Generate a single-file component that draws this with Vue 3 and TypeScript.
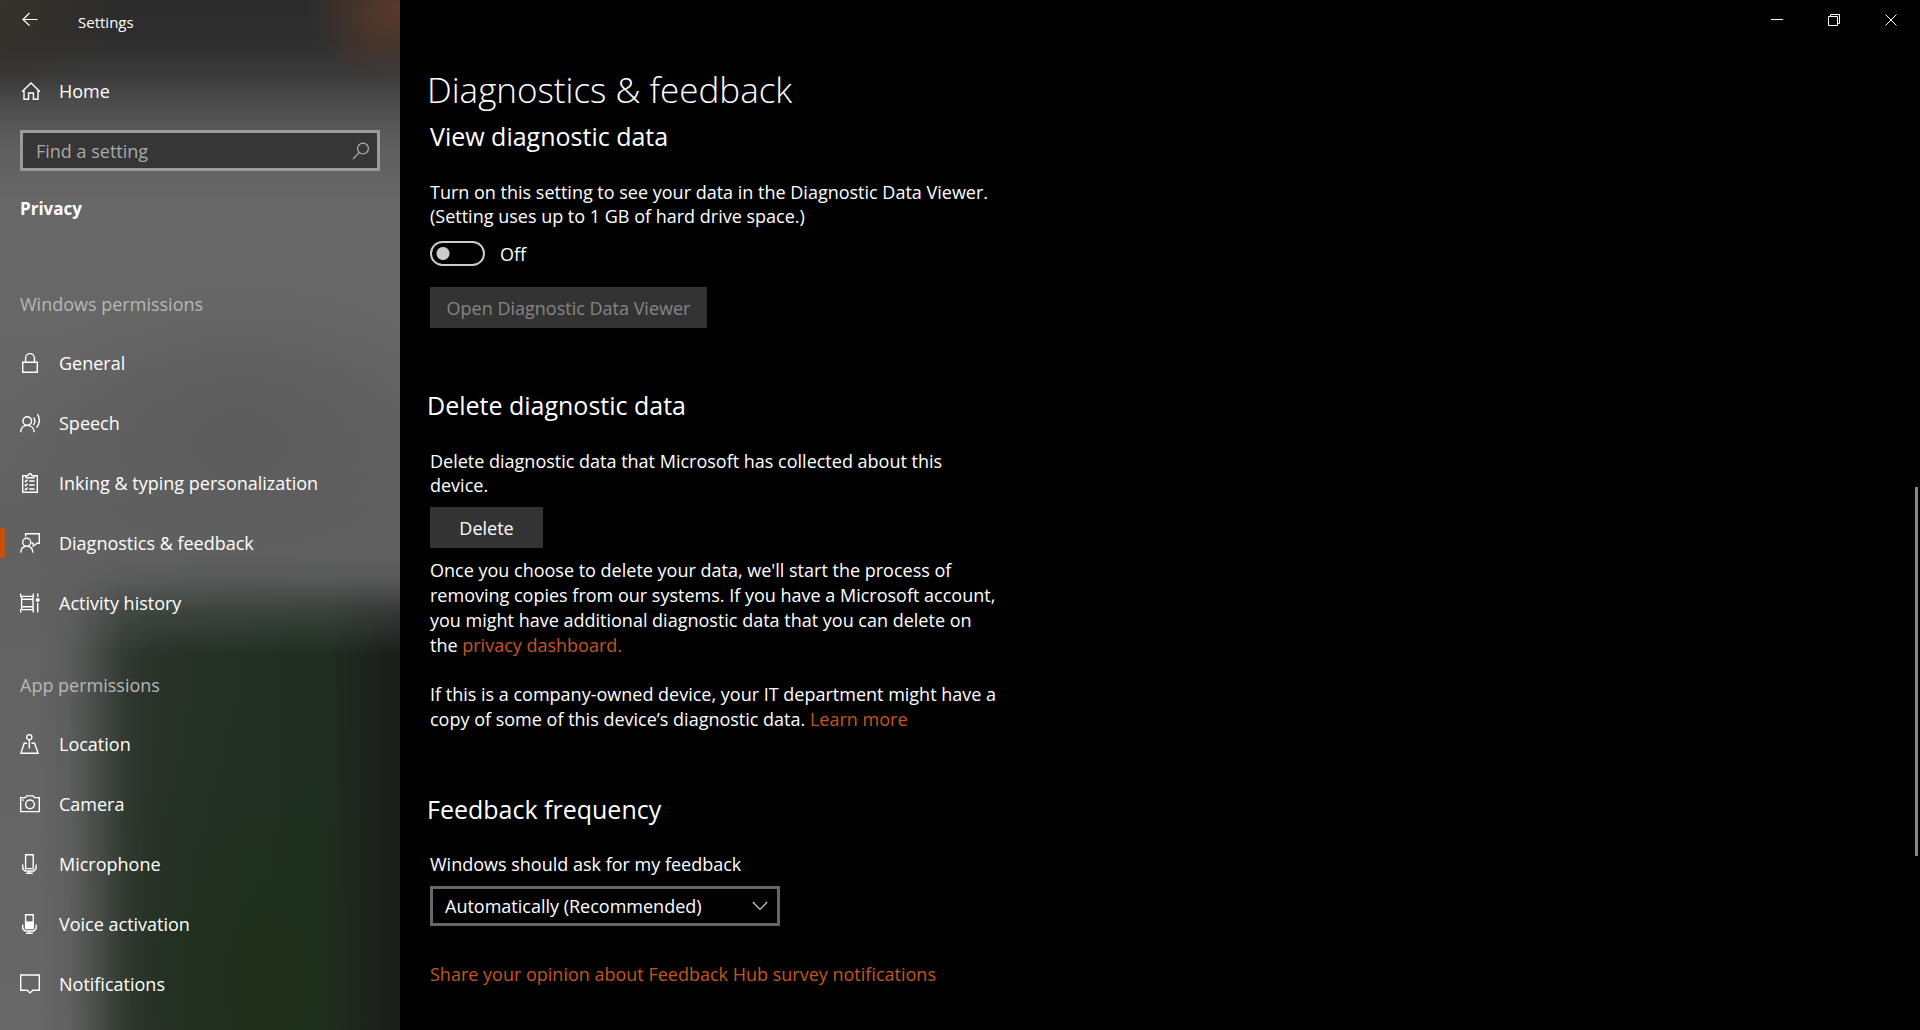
<script setup lang="ts">
import { ref } from 'vue'

interface NavItem {
  label: string
  icon: string
}
interface NavGroup {
  title: string
  items: NavItem[]
}

const groups: NavGroup[] = [
  {
    title: 'Windows permissions',
    items: [
      { label: 'General', icon: 'lock' },
      { label: 'Speech', icon: 'speech' },
      { label: 'Inking & typing personalization', icon: 'clipboard' },
      { label: 'Diagnostics & feedback', icon: 'feedback' },
      { label: 'Activity history', icon: 'history' },
    ],
  },
  {
    title: 'App permissions',
    items: [
      { label: 'Location', icon: 'location' },
      { label: 'Camera', icon: 'camera' },
      { label: 'Microphone', icon: 'mic' },
      { label: 'Voice activation', icon: 'voice' },
      { label: 'Notifications', icon: 'bell' },
    ],
  },
]

const paths: Record<string, string> = {
  lock: 'M2.7 9.2H17.3V19.3H2.7ZM5.6 9.2V5a4.4 4.4 0 0 1 8.8 0V9.2',
  speech:
    'M11.6 8a4.3 4.3 0 1 1-8.6 0a4.3 4.3 0 0 1 8.6 0M.7 19.3C.9 15 3.6 12.4 7.3 12.4S13.9 15 14.2 19.3M13.6 4.6c1.6 2.2 1.6 5.2-.2 7.4M17.4 1.2c2.6 4.4 2.6 9.2-.8 13.4',
  clipboard:
    'M6 2.7H2.7V19.3H17.3V2.7H14M6.2 4.8V2.6H8.2C8.4.2 11.6.2 11.8 2.6H13.8V4.8ZM9.2 8H14.6M9.2 12H14.6M9.2 16H14.6M4.8 7.8l1 1 1.8-2.2M4.8 11.8l1 1 1.8-2.2M4.8 15.8l1 1 1.8-2.2',
  feedback:
    'M10.7 9.2a4 4 0 1 1-8 0a4 4 0 0 1 8 0M.7 19.6C.9 15.8 3.2 13.2 6.7 13.2S12.7 15.8 13 19.6M5.6 3.4V.8H19.3V10.2H17.2L13.2 13.2V10.2H11.6',
  history:
    'M.7.6V3.4H13.3V.6M.7 19.4V16.6H13.3V19.4M1.6 6.2H13V13.8H1.6ZM1.6 3.4V16.6M13 3.4V16.6M17.7.6V4M17.7 10V19.4',
  location:
    'M11.9 3.2a2.6 2.6 0 1 1-5.2 0a2.6 2.6 0 0 1 5.2 0M9.3 5.8V14.6M7 9.2H4.2L.9 19.3H18.1L14.6 9.2H11.4',
  camera:
    'M.7 3.6H5.4L6.6 1.9H13.2L14.4 3.6H19.3V17.6H.7ZM14.4 10.4a4.4 4.4 0 1 1-8.8 0a4.4 4.4 0 0 1 8.8 0M2.4 6H4',
  mic: 'M5.6.8H13.2V14.6H5.6ZM2.7 10.6V14.6L5 17H13.8L16.1 14.6V10.6M9.4 17V19.3M6 19.3H12.8',
  voice: 'M5.6.8H13.2V14.6H5.6ZM2.7 10.6V14.6L5 17H13.8L16.1 14.6V10.6M9.4 17V19.3M6 19.3H12.8',
  bell: 'M.7 1H19.3V16.2H12.8L10 18.9L7.2 16.2H.7Z',
}

const active = ref('Diagnostics & feedback')
const query = ref('')
const viewerOn = ref(false)
const frequency = ref('auto')
</script>

<template>
  <div class="window">
    <aside class="sidebar">
      <header class="titlebar">
        <button class="back" type="button" aria-label="Back">
          <svg width="16" height="14" viewBox="0 0 16 14"><path d="M15.5 7.5H1M7.5 1L1 7.5l6.5 6" /></svg>
        </button>
        <span class="app-name">Settings</span>
      </header>

      <a class="nav-link home" href="#home">
        <svg width="20" height="20" viewBox="0 0 20 20">
          <path d="M2 10.8L11 2l9 8.8M4 9V18.3H8.6V12H13.4V18.3H18V9" />
        </svg>
        <span>Home</span>
      </a>

      <div class="search">
        <input v-model="query" type="text" placeholder="Find a setting" aria-label="Find a setting" />
        <svg width="18" height="18" viewBox="0 0 18 18">
          <circle cx="11" cy="6.6" r="5.4" />
          <path d="M7.2 10.6L1 17" />
        </svg>
      </div>

      <h2 class="category">Privacy</h2>

      <nav v-for="group in groups" :key="group.title" class="group" :aria-label="group.title">
        <h3>{{ group.title }}</h3>
        <a
          v-for="item in group.items"
          :key="item.label"
          class="nav-link"
          :class="{ active: item.label === active }"
          href="#"
          @click.prevent="active = item.label"
        >
          <svg width="20" height="20" viewBox="0 0 20 20">
            <path :d="paths[item.icon]" />
            <circle v-if="item.icon === 'history'" class="solid" cx="17.7" cy="7" r="2" />
            <rect v-if="item.icon === 'voice'" class="solid" x="5.6" y="7.4" width="7.6" height="7.2" />
          </svg>
          <span>{{ item.label }}</span>
        </a>
      </nav>
    </aside>

    <main class="content">
      <div class="caption-buttons">
        <button type="button" aria-label="Minimize">
          <svg width="12" height="12" viewBox="0 0 12 12"><path d="M0 5.5H12" /></svg>
        </button>
        <button type="button" aria-label="Restore">
          <svg width="12" height="12" viewBox="0 0 12 12">
            <path d="M.5 2.5H9.5V11.5H.5ZM2.5 2.5V.5H11.5V9.5H9.5" />
          </svg>
        </button>
        <button type="button" aria-label="Close">
          <svg width="12" height="12" viewBox="0 0 12 12"><path d="M.5.5l11 11M11.5.5l-11 11" /></svg>
        </button>
      </div>

      <h1>Diagnostics &amp; feedback</h1>

      <section class="view">
        <h2>View diagnostic data</h2>
        <p id="viewer-text">
          Turn on this setting to see your data in the Diagnostic Data Viewer.<br />
          (Setting uses up to 1 GB of hard drive space.)
        </p>
        <label class="toggle">
          <input v-model="viewerOn" type="checkbox" role="switch" aria-describedby="viewer-text" />
          <span>{{ viewerOn ? 'On' : 'Off' }}</span>
        </label>
        <button class="action wide" type="button" :disabled="!viewerOn">Open Diagnostic Data Viewer</button>
      </section>

      <section class="delete">
        <h2>Delete diagnostic data</h2>
        <p>Delete diagnostic data that Microsoft has collected about this<br />device.</p>
        <button class="action" type="button">Delete</button>
        <p class="note">
          Once you choose to delete your data, we'll start the process of<br />
          removing copies from our systems. If you have a Microsoft account,<br />
          you might have additional diagnostic data that you can delete on<br />
          the <a href="#dashboard">privacy dashboard.</a>
        </p>
        <p class="note company">
          If this is a company-owned device, your IT department might have a<br />
          copy of some of this device’s diagnostic data. <a href="#learn">Learn more</a>
        </p>
      </section>

      <section class="frequency">
        <h2>Feedback frequency</h2>
        <label for="frequency">Windows should ask for my feedback</label>
        <div class="select">
          <select id="frequency" v-model="frequency">
            <option value="auto">Automatically (Recommended)</option>
            <option value="always">Always</option>
            <option value="daily">Once a day</option>
            <option value="weekly">Once a week</option>
            <option value="never">Never</option>
          </select>
          <svg width="16" height="10" viewBox="0 0 16 10"><path d="M.8 1L8 8.4 15.2 1" /></svg>
        </div>
        <a class="survey" href="#survey">Share your opinion about Feedback Hub survey notifications</a>
      </section>

      <div class="scroll-thumb" aria-hidden="true"></div>
    </main>
  </div>
</template>

<style>
body {
  background: #000;
}
</style>

<style scoped>
.window {
  display: grid;
  grid-template-columns: 400px 1fr;
  min-height: 100vh;
  background: #000;
  color: #fff;
  font: 18px/24px 'Open Sans', 'Noto Sans', sans-serif;
}

h1,
h2,
h3,
p {
  margin: 0;
  font-weight: 400;
}

a {
  color: #c4561f;
  text-decoration: none;
}

button,
input,
select {
  margin: 0;
  padding: 0;
  border: 0;
  border-radius: 0;
  background: none;
  color: inherit;
  font: inherit;
}

svg {
  display: block;
  flex: none;
  fill: none;
  stroke: currentColor;
  stroke-width: 1.4;
}

.solid {
  fill: currentColor;
  stroke: none;
}

/* Sidebar with its acrylic backdrop */
.sidebar {
  position: relative;
  isolation: isolate;
  overflow: hidden;
  background:
    radial-gradient(ellipse 90px 75px at 396px 10px, #593a2b, transparent),
    radial-gradient(ellipse 120px 100px at 0 0, #37332a, transparent),
    radial-gradient(ellipse 240px 160px at 240px 440px, #5c5c5c, transparent),
    linear-gradient(#2b2b2b 0, #2e2e2e 40px, #3a3a3a 75px, #4d4d4e 105px, #5d5d5d 140px, #676767 200px, #676767 320px, #616162 520px, #676767 100%);
}

.sidebar::before {
  content: '';
  position: absolute;
  inset: 0;
  z-index: -1;
  background:
    linear-gradient(to right, transparent 325px, #1b1d1b 395px),
    radial-gradient(ellipse 180px 320px at 270px 980px, #1f2f1b, transparent),
    linear-gradient(to right, #2b342b 120px, #253127 200px, #1f2e21 300px);
  mask-image:
    linear-gradient(to right, transparent 40px, rgb(0 0 0 / 12%) 70px, rgb(0 0 0 / 50%) 98px, rgb(0 0 0 / 88%) 124px, #000 155px),
    linear-gradient(transparent 555px, rgb(0 0 0 / 15%) 580px, rgb(0 0 0 / 60%) 610px, #000 655px);
  mask-composite: intersect;
}

.titlebar {
  display: flex;
  align-items: center;
  gap: 40px;
  height: 44px;
  padding-left: 22px;
  font-size: 15px;
}

.back {
  height: 38px;
  align-self: flex-start;
}

.back svg {
  stroke-width: 1.2;
}

.app-name {
  line-height: 44px;
}

.nav-link {
  display: flex;
  align-items: center;
  gap: 19px;
  height: 60px;
  padding-left: 20px;
  color: #fff;
}

.nav-link.active {
  background: linear-gradient(#c8500f, #c8500f) left center / 5px 30px no-repeat;
}

.home {
  margin-top: 17px;
}

.search {
  display: flex;
  align-items: center;
  height: 41px;
  box-sizing: border-box;
  margin: 9px 20px 0;
  padding: 0 7px 0 13px;
  border: 3px solid #9b9b9b;
  background: #363636;
  color: #b0b0b0;
}

.search input {
  flex: 1;
  min-width: 0;
  height: 100%;
  outline: none;
}

.search input::placeholder {
  color: #a9a9a9;
  opacity: 1;
}

.search svg {
  stroke-width: 1.2;
}

.category {
  margin: 26px 20px 0;
  font-size: 17px;
  font-weight: 700;
}

.group h3 {
  padding-left: 20px;
  color: #b8b8b8;
  font-size: 18px;
}

.group {
  margin-top: 40px;
}

.category + .group {
  margin-top: 71px;
}

.group h3 + .nav-link {
  margin-top: 17px;
}

/* Content pane */
.content {
  position: relative;
  padding-left: 30px;
}

.caption-buttons {
  display: flex;
  justify-content: flex-end;
  height: 40px;
  padding-right: 1px;
}

.caption-buttons button {
  display: flex;
  justify-content: center;
  width: 57px;
  padding-top: 14px;
}

.caption-buttons svg {
  stroke-width: 1;
}

h1 {
  margin: 26px 0 0 -3px;
  font-size: 35px;
  font-weight: 300;
  line-height: 48px;
}

section h2 {
  font-size: 25px;
  line-height: 30px;
}

.view h2 {
  margin-top: 7px;
}

section p,
section label {
  white-space: nowrap;
}

.view p,
.delete h2 + p {
  margin-top: 29px;
}

.toggle {
  display: flex;
  align-items: center;
  gap: 15px;
  width: max-content;
  height: 25px;
  margin-top: 13px;
}

.toggle input {
  appearance: none;
  box-sizing: border-box;
  width: 55px;
  height: 25px;
  border: 2px solid #ccc;
  border-radius: 13px;
  background: radial-gradient(circle at 11px 50%, #ccc 6px, transparent 7px);
}

.toggle input:checked {
  background: radial-gradient(circle at 40px 50%, #ccc 6px, transparent 7px);
}

.action {
  display: block;
  height: 41px;
  min-width: 113px;
  background: #333;
}

.action.wide {
  min-width: 277px;
  margin-top: 21px;
}

.action:disabled {
  color: #858585;
}

.delete .action {
  margin-top: 10px;
}

.delete h2,
.frequency h2 {
  margin: 0 0 0 -3px;
}

.delete {
  margin-top: 62px;
}

.note {
  margin-top: 10px;
  line-height: 25px;
}

.note.company {
  margin-top: 24px;
}

.frequency {
  margin-top: 62px;
}

.frequency label {
  display: block;
  margin-top: 28px;
}

.select {
  display: grid;
  align-items: center;
  width: 350px;
  height: 40px;
  margin-top: 10px;
}

.select select,
.select svg {
  grid-area: 1 / 1;
}

.select select {
  appearance: none;
  box-sizing: border-box;
  width: 100%;
  height: 100%;
  padding: 0 40px 0 12px;
  border: 3px solid #666;
  background: #000;
}

.select svg {
  justify-self: end;
  margin-right: 12px;
  color: #ccc;
  stroke-width: 1.2;
  pointer-events: none;
}

.survey {
  display: inline-block;
  margin-top: 36px;
}

.scroll-thumb {
  position: absolute;
  top: 47.3%;
  right: 2px;
  width: 3px;
  height: 35.8%;
  background: #858585;
}
</style>
